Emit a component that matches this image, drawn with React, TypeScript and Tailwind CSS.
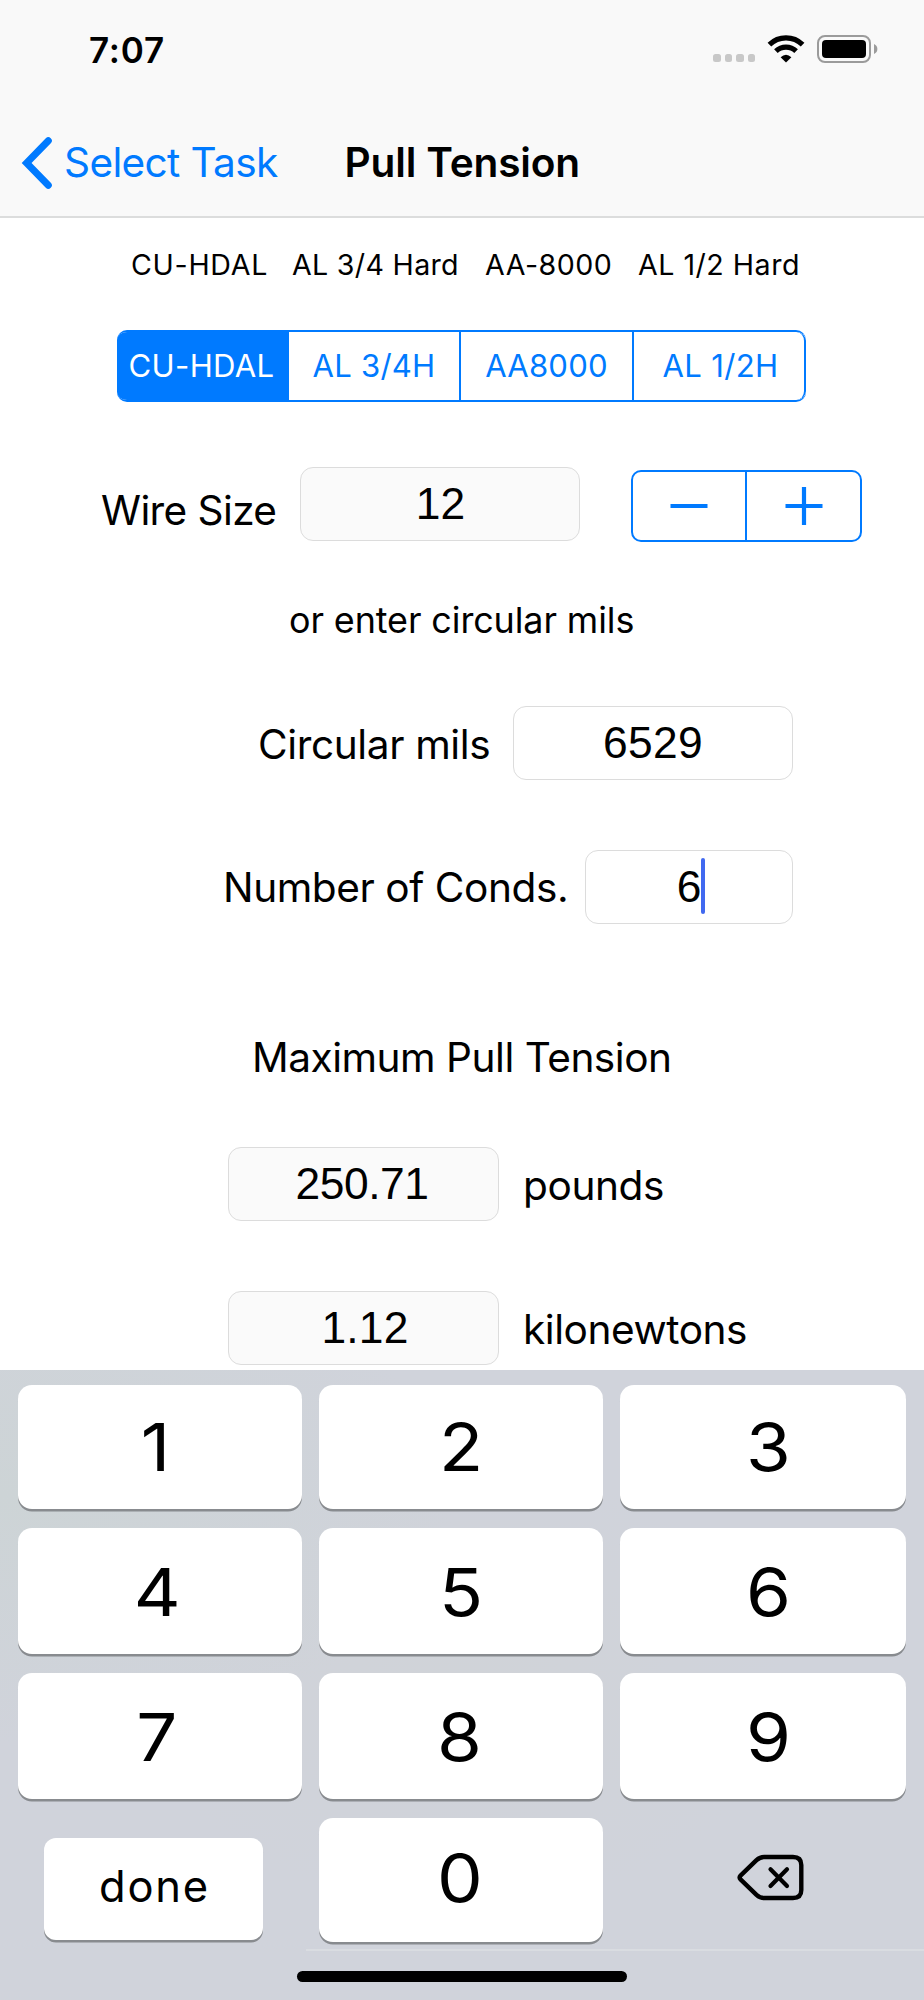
import { useState } from 'react';
import clsx from 'clsx';

const materials = [
  { label: 'CU-HDAL', className: 'w-[172px] pr-[3px] tracking-[0.3px]' },
  { label: 'AL 3/4H', className: 'w-[172px] border-r-2 tracking-[0.2px]' },
  { label: 'AA8000', className: 'w-[173px] border-r-2 tracking-[0.15px]' },
  { label: 'AL 1/2H', className: 'w-[172px] border-r-2 pl-[3px] tracking-[0.3px]' },
];

const digitKeys = [
  { label: '1', className: 'pr-[10px]' },
  { label: '2', className: '' },
  { label: '3', className: 'pl-[10px]' },
  { label: '4', className: 'pt-[2px] pr-[5px]' },
  { label: '5', className: 'pt-[2px] pl-[1px]' },
  { label: '6', className: 'pt-[2px] pl-[11px]' },
  { label: '7', className: 'pt-[2px] pr-[6px]' },
  { label: '8', className: 'pt-[2px] pr-[4px]' },
  { label: '9', className: 'pt-[2px] pl-[11px]' },
];

const keyShadow = 'bg-white shadow-[0_2.5px_0_#888b8f]';

const StatusIcons = () => (
  <div className="flex items-center">
    <div className="mt-[18px] flex gap-[4.2px]">
      {[0, 1, 2, 3].map((dot) => (
        <span key={dot} className="h-[7.4px] w-[7.3px] rounded-[2.5px] bg-[#c8c8c8]" />
      ))}
    </div>
    <svg className="ml-[12px] h-[28px] w-[38px]" viewBox="0 0 38 28" fill="none">
      <path d="M2.4 9.6A23.8 23.8 0 0 1 35.6 9.6" stroke="#000" strokeWidth="5.2" />
      <path d="M8.9 16.2A14.6 14.6 0 0 1 29.1 16.2" stroke="#000" strokeWidth="5.2" />
      <path d="M13.6 22.2Q19 17.2 24.4 22.2L19 27.6Z" fill="#000" />
    </svg>
    <div className="ml-[12px] h-[28px] w-[54px] rounded-[8px] border-2 border-[#9b9b9b] p-[2.6px]">
      <div className="h-full rounded-[4px] bg-black" />
    </div>
    <svg className="ml-[3px] h-[10px] w-[4px]" viewBox="0 0 4 10">
      <path d="M0 0Q3.4 1.6 3.4 5T0 10Z" fill="#9b9b9b" />
    </svg>
  </div>
);

const Field = ({ value, className }: { value: string; className?: string }) => (
  <div
    className={clsx(
      "flex h-[74px] shrink-0 items-center justify-center rounded-[13px] border border-[#dcdcdc] font-['Liberation_Sans',Arial,sans-serif] text-[44.35px] leading-none",
      className
    )}
  >
    {value}
  </div>
);

export default function App() {
  const [material, setMaterial] = useState('CU-HDAL');

  return (
    <div className="h-[2000px] w-[924px] overflow-hidden bg-white font-['Inter','Liberation_Sans',sans-serif] text-[40.6px] leading-none whitespace-nowrap text-black">
      <header className="h-[218px] border-b-2 border-[#dcdddd] bg-[#f9f9f9]">
        <div className="flex h-[98px] items-center justify-between pr-[46px] pl-[89px]">
          <span className="pt-[2px] text-[35px] font-semibold tracking-[0.8px]">7:07</span>
          <StatusIcons />
        </div>
        <div className="flex h-[118px] items-center pt-[11px] pl-[20px]">
          <button className="flex items-center text-[#007aff]">
            <svg className="h-[54px] w-[34px]" viewBox="0 0 34 54" fill="none">
              <path d="M28.3 4.7L6.6 27L28.3 49.3" stroke="currentColor" strokeWidth="7" strokeLinecap="round" />
            </svg>
            <span className="ml-[10px] pt-[2px] tracking-[-0.65px]">Select Task</span>
          </button>
          <h1 className="ml-[67px] pt-[2px] font-semibold tracking-[-0.16px]">Pull Tension</h1>
        </div>
      </header>

      <main className="h-[1152px] overflow-hidden">
        <div className="flex h-[93px] items-center pt-[2px] pl-[131px] text-[28.6px]">
          <span className="w-[161px] tracking-[0.7px]">CU-HDAL</span>
          <span className="w-[193px] tracking-[0.31px]">AL 3/4 Hard</span>
          <span className="w-[153px] tracking-[0.5px]">AA-8000</span>
          <span className="tracking-[0.5px]">AL 1/2 Hard</span>
        </div>

        <div className="mt-[19px] ml-[117px] flex h-[72px] w-[689px] overflow-hidden rounded-[10px] border-y-2 border-[#007aff] text-[31.1px]">
          {materials.map(({ label, className }) => (
            <button
              key={label}
              onClick={() => setMaterial(label)}
              className={clsx(
                'border-[#007aff] pt-[2px] last:rounded-r-[9px]',
                material === label ? 'bg-[#007aff] text-white' : 'text-[#007aff]',
                className
              )}
            >
              {label}
            </button>
          ))}
        </div>

        <div className="mt-[65px] flex h-[74px] items-center pl-[101px]">
          <span className="w-[199px] pt-[15px] tracking-[-0.6px]">Wire Size</span>
          <Field value="12" className="w-[280px] bg-[#fafafa] pl-[1px]" />
          <div className="mt-[4px] ml-[51px] flex h-[72px] w-[231px] rounded-[10px] border-2 border-[#007aff] text-[#007aff]">
            <button className="flex w-[114px] items-center justify-center border-r-2 border-[#007aff]">
              <svg className="h-[38px] w-[38px]" viewBox="0 0 38 38">
                <path d="M0.5 19H37.5" stroke="currentColor" strokeWidth="4.2" />
              </svg>
            </button>
            <button className="flex flex-1 items-center justify-center">
              <svg className="h-[38px] w-[38px]" viewBox="0 0 38 38">
                <path d="M0.5 19H37.5M19 0V38" stroke="currentColor" strokeWidth="4.2" />
              </svg>
            </button>
          </div>
        </div>

        <p className="mt-[45px] flex h-[68px] items-center pt-[2px] pl-[289px] text-[35.9px] tracking-[-0.09px]">
          or enter circular mils
        </p>

        <div className="mt-[52px] flex h-[74px] items-center pl-[258px]">
          <span className="w-[255px] pt-[5px] tracking-[-0.38px]">Circular mils</span>
          <Field value="6529" className="w-[280px] tracking-[0.3px]" />
        </div>

        <div className="mt-[70px] flex h-[74px] items-center pl-[223px]">
          <span className="w-[362px] pt-[2px] tracking-[-0.42px]">Number of Conds.</span>
          <div className="relative">
            <Field value="6" className="w-[208px]" />
            <span className="absolute top-[8px] left-[116px] h-[56px] w-[4px] rounded-full bg-[#4169f0]" />
          </div>
        </div>

        <h2 className="mt-[100px] flex h-[67px] items-center pt-[2px] pl-[252px] tracking-[-0.48px]">
          Maximum Pull Tension
        </h2>

        <div className="mt-[56px] flex h-[74px] items-center pl-[228px]">
          <Field value="250.71" className="w-[271px] bg-[#fafafa] pr-[3px] tracking-[-0.4px]" />
          <span className="ml-[24px] pt-[5px] tracking-[-0.4px]">pounds</span>
        </div>

        <div className="mt-[70px] flex h-[74px] items-center pl-[228px]">
          <Field value="1.12" className="w-[271px] bg-[#fafafa] pl-[3px] tracking-[0.2px]" />
          <span className="ml-[24px] pt-[5px] tracking-[-0.45px]">kilonewtons</span>
        </div>
      </main>

      <footer className="h-[630px] bg-[#d0d3db] bg-[radial-gradient(ellipse_at_0%_20%,#cdd4d6_0%,transparent_35%),radial-gradient(ellipse_at_50%_50%,#d0d3d8_0%,transparent_50%)] pt-[15px]">
        <div className="grid grid-cols-[284px_284px_286px] grid-rows-[124px_126px_126px_124px] gap-x-[17px] gap-y-[19px] pl-[18px]">
          {digitKeys.map(({ label, className }) => (
            <button
              key={label}
              className={clsx('flex items-center justify-center rounded-[14px] text-[66px]', keyShadow, className)}
            >
              <span className="scale-x-110">{label}</span>
            </button>
          ))}
          <button
            className={clsx(
              'mt-[20px] ml-[26px] h-[102px] w-[219px] rounded-[12px] pb-[5px] pl-[2px] text-[43.5px] tracking-[1.8px]',
              keyShadow
            )}
          >
            done
          </button>
          <button
            className={clsx('flex items-center justify-center rounded-[14px] pr-[3px] pb-[5px] text-[66px]', keyShadow)}
          >
            <span className="scale-x-110">0</span>
          </button>
          <button className="flex items-center justify-center pb-[6px] pl-[16px]">
            <svg className="h-[50px] w-[70px]" viewBox="0 0 70 50" fill="none" stroke="#000" strokeLinecap="round" strokeLinejoin="round">
              <path
                d="M4.5 23.6L20.5 8.2Q24 5 28 5H57Q65.3 5 65.3 13V38Q65.3 46 57 46H28Q24 46 20.5 42.8L4.5 27.4Q2.6 25.5 4.5 23.6Z"
                strokeWidth="4.4"
              />
              <path d="M34.5 17.2L51 34M51 17.2L34.5 34" strokeWidth="4.2" />
            </svg>
          </button>
        </div>
        <div className="mt-[7px] ml-[306px] h-[2px] bg-[#d9dce1]" />
        <div className="mt-[20px] ml-[297px] h-[11px] w-[330px] rounded-full bg-black" />
      </footer>
    </div>
  );
}
